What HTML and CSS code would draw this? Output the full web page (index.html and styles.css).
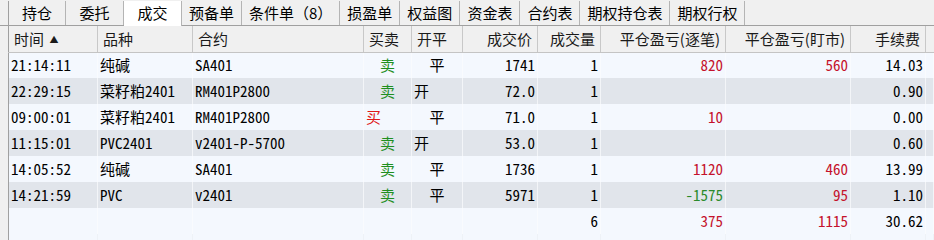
FILE: index.html
```html
<!DOCTYPE html>
<html lang="zh-CN">
<head>
    <meta charset="UTF-8">
    <title>成交</title>
    <link rel="stylesheet" href="styles.css">
</head>
<body>
    <div class="tabs">
        <div class="tab">持仓</div>
        <div class="tab">委托</div>
        <div class="tab active">成交</div>
        <div class="tab">预备单</div>
        <div class="tab">条件单（8）</div>
        <div class="tab">损盈单</div>
        <div class="tab">权益图</div>
        <div class="tab">资金表</div>
        <div class="tab">合约表</div>
        <div class="tab">期权持仓表</div>
        <div class="tab">期权行权</div>
    </div>

    <table class="deals">
        <colgroup>
            <col style="width: 89px">
            <col style="width: 95px">
            <col style="width: 171px">
            <col style="width: 48px">
            <col style="width: 51px">
            <col style="width: 75px">
            <col style="width: 63px">
            <col style="width: 125px">
            <col style="width: 125px">
            <col style="width: 75px">
            <col>
        </colgroup>
        <thead>
            <tr>
                <th>时间 <span class="sort">▲</span></th>
                <th>品种</th>
                <th>合约</th>
                <th>买卖</th>
                <th>开平</th>
                <th class="num">成交价</th>
                <th class="num">成交量</th>
                <th class="num">平仓盈亏(逐笔)</th>
                <th class="num">平仓盈亏(盯市)</th>
                <th class="num">手续费</th>
                <th class="blank"></th>
            </tr>
        </thead>
        <tbody>
            <tr>
                <td>21:14:11</td><td>纯碱</td><td>SA401</td>
                <td class="sell">卖</td><td class="close">平</td>
                <td class="num">1741</td><td class="num">1</td>
                <td class="num up">820</td><td class="num up">560</td><td class="num">14.03</td><td></td>
            </tr>
            <tr>
                <td>22:29:15</td><td>菜籽粕2401</td><td>RM401P2800</td>
                <td class="sell">卖</td><td class="open">开</td>
                <td class="num">72.0</td><td class="num">1</td>
                <td class="num"></td><td class="num"></td><td class="num">0.90</td><td></td>
            </tr>
            <tr>
                <td>09:00:01</td><td>菜籽粕2401</td><td>RM401P2800</td>
                <td class="buy">买</td><td class="close">平</td>
                <td class="num">71.0</td><td class="num">1</td>
                <td class="num up">10</td><td class="num"></td><td class="num">0.00</td><td></td>
            </tr>
            <tr>
                <td>11:15:01</td><td>PVC2401</td><td>v2401-P-5700</td>
                <td class="sell">卖</td><td class="open">开</td>
                <td class="num">53.0</td><td class="num">1</td>
                <td class="num"></td><td class="num"></td><td class="num">0.60</td><td></td>
            </tr>
            <tr>
                <td>14:05:52</td><td>纯碱</td><td>SA401</td>
                <td class="sell">卖</td><td class="close">平</td>
                <td class="num">1736</td><td class="num">1</td>
                <td class="num up">1120</td><td class="num up">460</td><td class="num">13.99</td><td></td>
            </tr>
            <tr>
                <td>14:21:59</td><td>PVC</td><td>v2401</td>
                <td class="sell">卖</td><td class="close">平</td>
                <td class="num">5971</td><td class="num">1</td>
                <td class="num down">-1575</td><td class="num up">95</td><td class="num">1.10</td><td></td>
            </tr>
            <tr class="total">
                <td></td><td></td><td></td><td></td><td></td>
                <td class="num"></td><td class="num">6</td>
                <td class="num up">375</td><td class="num up">1115</td><td class="num">30.62</td><td></td>
            </tr>
            <tr class="filler">
                <td></td><td></td><td></td><td></td><td></td><td></td><td></td><td></td><td></td><td></td><td></td>
            </tr>
        </tbody>
    </table>
</body>
</html>
```

FILE: styles.css
```css
body {
    margin: 0;
    background: #f0f0f0;
    color: #000;
    font-family: "Noto Sans CJK SC", sans-serif;
    overflow: hidden;
}

.tabs {
    display: flex;
    height: 26px;
    box-sizing: border-box;
    padding: 1px 0 0 8px;
    border-bottom: 1px solid #a0a0a0;
}

.tab {
    min-width: 58px;
    box-sizing: border-box;
    padding: 0 7px;
    text-align: center;
    font-size: 15px;
    line-height: 23px;
    border-right: 1px solid #b4b4b4;
    white-space: nowrap;
}

.tab:first-child {
    border-left: 1px solid #a0a0a0;
}

.tab.active {
    background: #fff;
    margin-bottom: -1px;
}

.deals {
    margin-left: 8px;
    width: 926px;
    table-layout: fixed;
    border-collapse: collapse;
    border-left: 1px solid #a0a0a0;
}

.deals th,
.deals td {
    box-sizing: border-box;
    height: 26px;
    white-space: nowrap;
}

.deals th {
    padding: 0 5px 1px;
    text-align: left;
    font-weight: normal;
    font-size: 15px;
    color: #1a1a1a;
    background: #f0f0f0;
    border-right: 1px solid #c8c8c8;
    border-bottom: 1px solid #c4c4c4;
}

.deals th.num {
    text-align: right;
}

.deals th.blank {
    border-right: none;
}

.sort {
    font-size: 9px;
    vertical-align: 2px;
    margin-left: 2px;
}

.deals td {
    padding: 0 2px 2px;
    font-family: "Noto Sans Mono CJK SC", "Liberation Mono", "Noto Sans CJK SC", monospace;
    font-size: 15px;
    background: #f4f8fe;
    border-right: 1px solid #f9fbfe;
}

.deals tbody tr:nth-child(even) td {
    background: #e1e5eb;
    border-right-color: #f3f5f8;
}

.deals tbody tr.filler td {
    height: 40px;
    background: #f4f8fe;
    border-right-color: #eef2f7;
}

.deals td.num {
    text-align: right;
}

.deals td.sell {
    text-align: center;
    color: #1f8f1f;
}

.deals td.buy {
    color: #e01818;
}

.deals td.close {
    text-align: center;
}

.deals td.up {
    color: #c4122c;
}

.deals td.down {
    color: #2b8a2b;
}
```
